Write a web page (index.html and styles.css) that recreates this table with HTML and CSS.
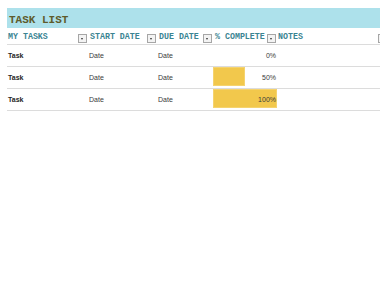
FILE: index.html
```html
<!DOCTYPE html>
<html>
<head>
<meta charset="utf-8">
<link rel="stylesheet" href="styles.css">
</head>
<body>
<div class="sheet">
  <div class="title">TASK LIST</div>
  <div class="grid">
    <div class="hcell">MY TASKS<span class="dd"></span></div>
    <div class="hcell">START DATE<span class="dd"></span></div>
    <div class="hcell">DUE DATE<span class="dd"></span></div>
    <div class="hcell">% COMPLETE<span class="dd"></span></div>
    <div class="hcell">NOTES<span class="dd"></span></div>

    <div class="cell task">Task</div>
    <div class="cell">Date</div>
    <div class="cell">Date</div>
    <div class="cell pct"><span class="val">0%</span></div>
    <div class="cell"></div>

    <div class="cell task">Task</div>
    <div class="cell">Date</div>
    <div class="cell">Date</div>
    <div class="cell pct"><span class="bar" style="width:50%"></span><span class="val">50%</span></div>
    <div class="cell"></div>

    <div class="cell task">Task</div>
    <div class="cell">Date</div>
    <div class="cell">Date</div>
    <div class="cell pct"><span class="bar" style="width:100%"></span><span class="val">100%</span></div>
    <div class="cell"></div>
  </div>
</div>
</body>
</html>
```

FILE: styles.css
```css
html, body {
  margin: 0;
  padding: 0;
  background: #ffffff;
  overflow: hidden;
}
.sheet {
  margin: 8px 0 0 7px;
  width: 390px;
}
.title {
  height: 20px;
  background: #ade1eb;
  display: flex;
  align-items: flex-end;
  padding: 0 0 2px 2px;
  box-sizing: border-box;
  font-family: "Liberation Mono", "Courier New", monospace;
  font-weight: bold;
  font-size: 11px;
  line-height: 11px;
  color: #5e5b2c;
}
.grid {
  display: grid;
  grid-template-columns: 81px 69px 56px 64px 111px;
}
.hcell {
  position: relative;
  height: 16px;
  border-bottom: 1px solid #dcdcdc;
  display: flex;
  align-items: center;
  padding-left: 1px;
  font-family: "Liberation Mono", "Courier New", monospace;
  font-weight: bold;
  font-size: 8.3px;
  color: #3a8492;
  white-space: nowrap;
}
.hcell:nth-child(2), .hcell:nth-child(3), .hcell:nth-child(4) { padding-left: 2px; }
.dd {
  position: absolute;
  right: 1px;
  bottom: 1px;
  width: 7px;
  height: 7px;
  border: 1px solid #a6a6a6;
  background: #f3f3f3;
}
.dd::after {
  content: "";
  position: absolute;
  left: 2px;
  top: 3px;
  border-left: 1.5px solid transparent;
  border-right: 1.5px solid transparent;
  border-top: 2px solid #333;
}
.cell {
  position: relative;
  height: 21px;
  border-bottom: 1px solid #dcdcdc;
  display: flex;
  align-items: center;
  padding-left: 1px;
  font-family: "Liberation Sans", Arial, sans-serif;
  font-size: 7px;
  color: #3a3a3a;
}
.task { font-weight: bold; color: #262626; }
.pct {
  justify-content: flex-end;
  padding: 0 1px 0 0;
}
.bar {
  position: absolute;
  left: 0;
  top: 0;
  height: 19px;
  background: #f2c84c;
  box-shadow: inset 0 0 0 1px #f5d36e;
}
.val { position: relative; }
```
